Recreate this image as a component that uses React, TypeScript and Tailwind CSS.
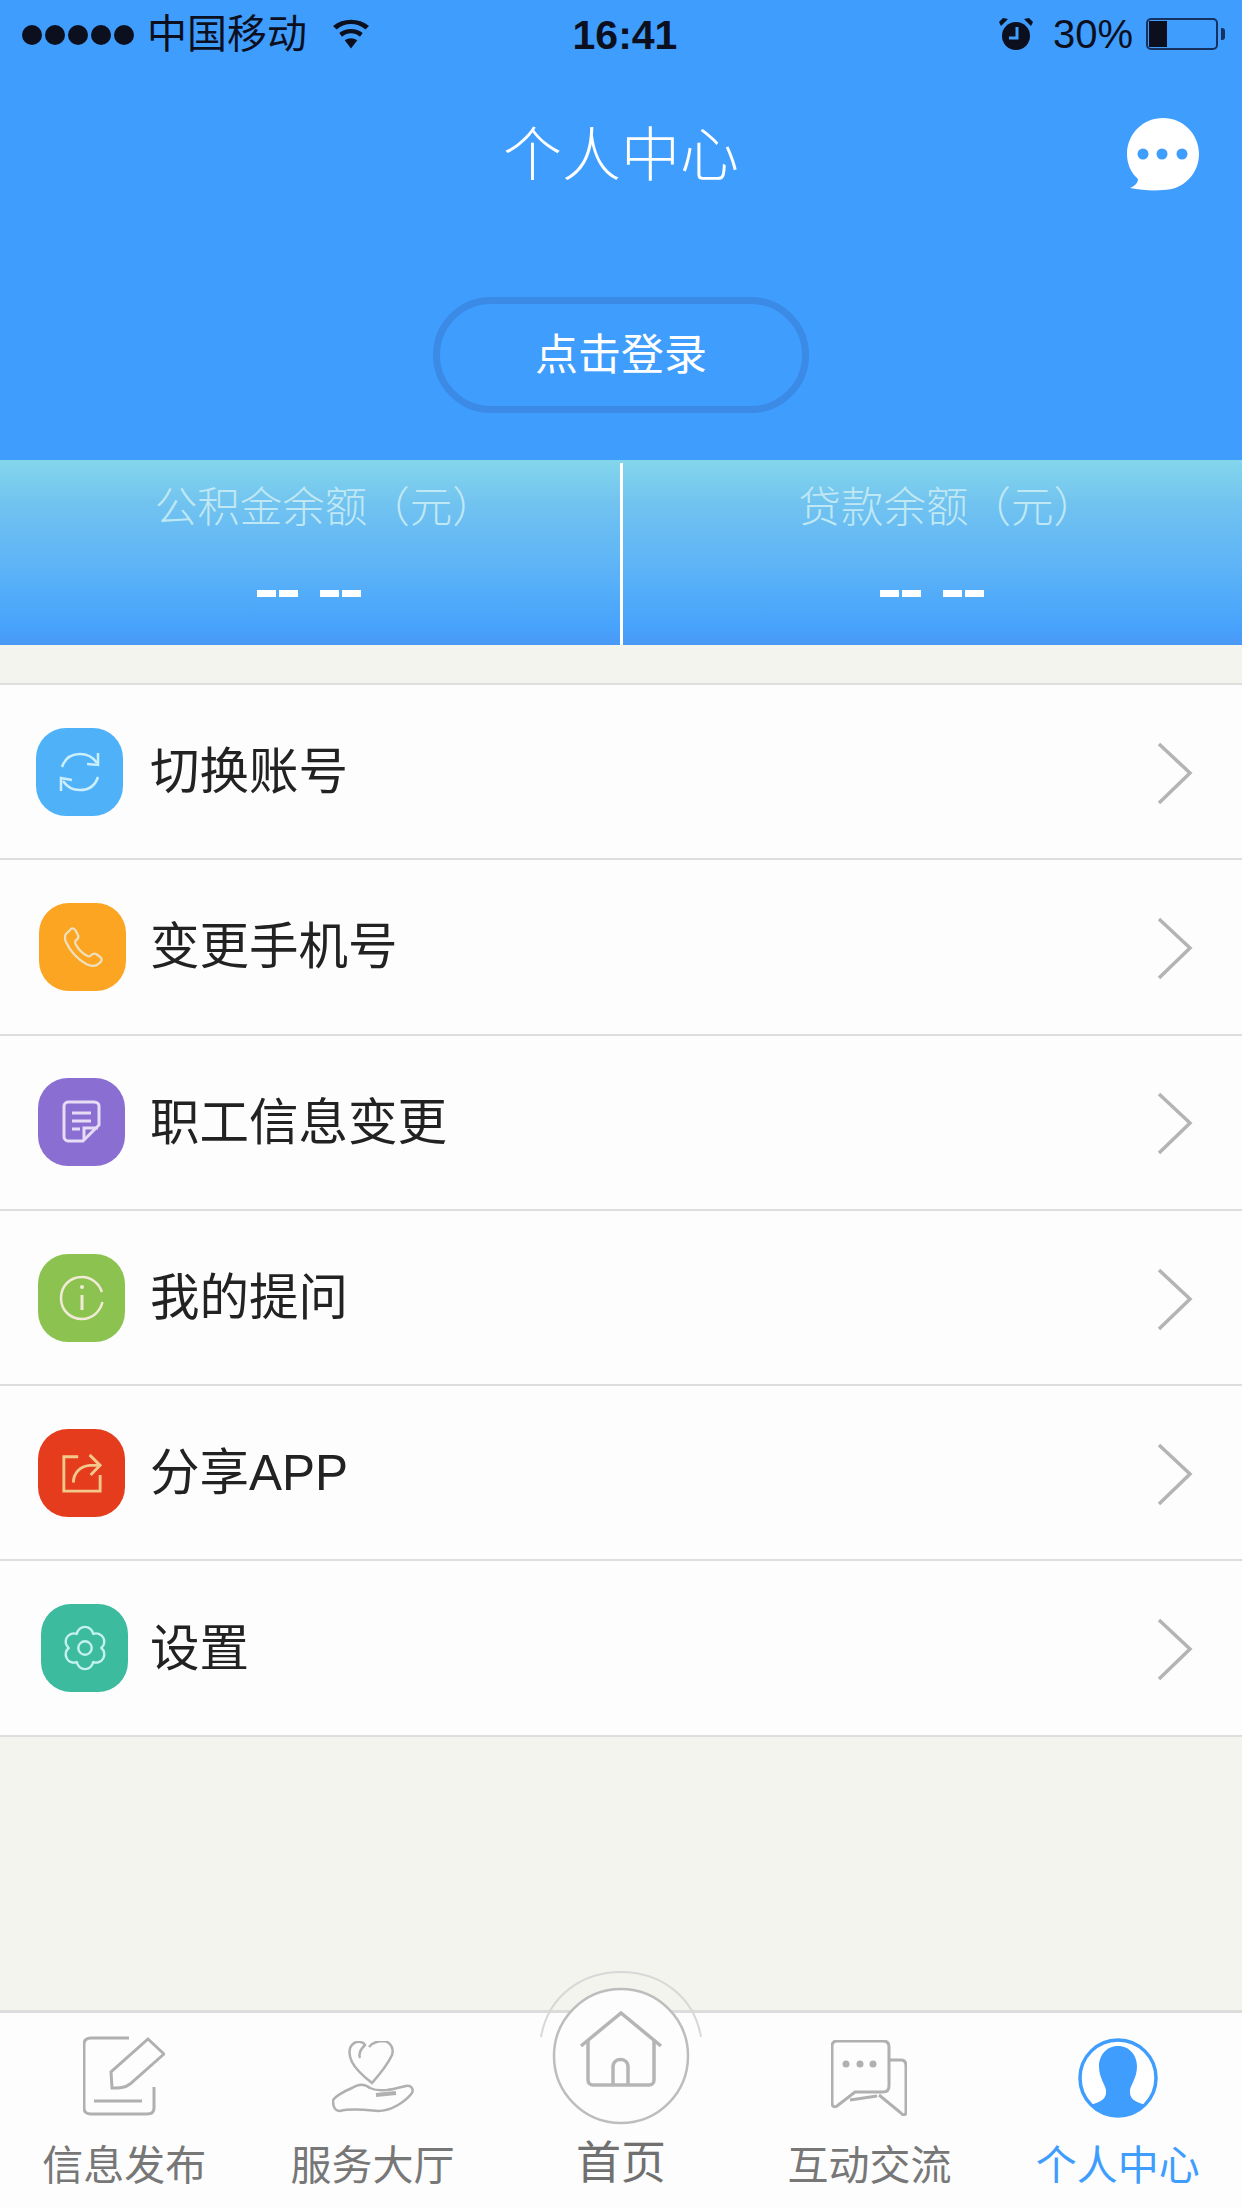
import React from "react";

const font = { fontFamily: '"Liberation Sans", "Noto Sans CJK SC", sans-serif' };

const Chevron = () => (
  <svg width="36" height="64" viewBox="0 0 36 64" fill="none" stroke="#b4b4b4" strokeWidth="3.5">
    <path d="M2 3 L33 32 L2 62" />
  </svg>
);

const SyncIcon = () => (
  <svg width="44" height="44" viewBox="0 0 44 44" fill="none" stroke="#cdeefc" strokeWidth="2.5">
    <path d="M4 17 C7 8 14 4 22 4 C29 4 35 7 39 13" />
    <path d="M40 3 L40 15 L29 14" />
    <path d="M40 27 C37 36 30 40 22 40 C15 40 9 37 5 31" />
    <path d="M3 41 L3 28 L14 30" />
  </svg>
);

const PhoneIcon = () => (
  <svg width="40" height="40" viewBox="0 0 44 44" fill="none" stroke="#efe0bd" strokeWidth="2.5">
    <path d="M3 8 L9 2 C11 1 13 2 14 4 L17 10 C17 12 16 14 14 15 C13 16 13 17 14 19 C17 25 21 29 27 32 C29 33 30 32 31 31 C33 29 35 29 37 30 L41 33 C43 35 43 37 41 39 L37 42 C34 43 30 43 26 41 C17 36 8 27 3 16 C2 13 2 10 3 8 Z" />
  </svg>
);

const NoteIcon = () => (
  <svg width="40" height="44" viewBox="0 0 40 44" fill="none" stroke="#e6dcf5" strokeWidth="3">
    <path d="M21 41 L6 41 C4 41 2 39 2 37 L2 6 C2 4 4 2 6 2 L32 2 C35 2 37 4 37 6 L37 25 L21 41 Z" />
    <path d="M10 13 L29 13 M10 21 L29 21 M10 29 L18 29" />
    <path d="M22 40 L22 28 L36 28" />
  </svg>
);

const InfoIcon = () => (
  <svg width="46" height="46" viewBox="0 0 46 46" fill="none" stroke="#f1ead6" strokeWidth="2.5">
    <path d="M43 17 C40 8 32 2 23 2 C11 2 2 11 2 23 C2 35 11 44 23 44 C33 44 41 37 43.500 27" />
    <path d="M23 20 L23 35" strokeWidth="3" />
    <circle cx="23" cy="12" r="2" fill="#f1ead6" stroke="none" />
  </svg>
);

const ShareIcon = () => (
  <svg width="42" height="42" viewBox="0 0 44 44" fill="none" stroke="#f3c98b" strokeWidth="3">
    <path d="M18 5 L3 5 L3 41 L41 41 L41 24" />
    <path d="M13 32 C13 22 20 15 30 14 L40 14" />
    <path d="M30 3 L41 14 L31 24" />
  </svg>
);

const GearIcon = () => (
  <svg width="46" height="46" viewBox="0 0 48 48" fill="none" stroke="#c5f2ee" strokeWidth="2.500" strokeLinejoin="round">
    <path d="M32.500 9.300 A8.600 8.600 0 0 1 41 24 A8.600 8.600 0 0 1 32.500 38.700 A8.600 8.600 0 0 1 15.500 38.700 A8.600 8.600 0 0 1 7 24 A8.600 8.600 0 0 1 15.500 9.300 A8.600 8.600 0 0 1 32.500 9.300 Z" />
    <circle cx="24" cy="24" r="7" />
  </svg>
);

const items = [
  { label: "切换账号", bg: "bg-[#4fb2f8]", ml: "ml-[36px]", icon: <SyncIcon /> },
  { label: "变更手机号", bg: "bg-[#fca522]", ml: "ml-[39px]", icon: <PhoneIcon /> },
  { label: "职工信息变更", bg: "bg-[#8a6ed2]", ml: "ml-[38px]", icon: <NoteIcon /> },
  { label: "我的提问", bg: "bg-[#8cc350]", ml: "ml-[38px]", icon: <InfoIcon /> },
  { label: "分享APP", bg: "bg-[#e63c1e]", ml: "ml-[38px]", icon: <ShareIcon /> },
  { label: "设置", bg: "bg-[#3dbb9f]", ml: "ml-[41px]", icon: <GearIcon /> },
];

const Balance = ({ label }: { label: string }) => (
  <div className="flex-1 flex flex-col items-center">
    <div className="mt-[20px] h-[56px] text-[42.500px] leading-[56px] text-[#c0e8f4] font-light pl-[30px]">{label}</div>
    <div className="mt-[54px] flex gap-[21px]">
      <div className="w-[42px] h-[7px] bg-[repeating-linear-gradient(90deg,#ffffff_0,#ffffff_19px,transparent_19px,transparent_22px)]" />
      <div className="w-[42px] h-[7px] bg-[repeating-linear-gradient(90deg,#ffffff_0,#ffffff_19px,transparent_19px,transparent_22px)]" />
    </div>
  </div>
);

const App: React.FC = () => {
  return (
    <div className="w-[1242px] h-[2208px] flex flex-col bg-[#f4f4ee] overflow-hidden" style={font}>
      {/* 顶部 */}
      <div className="h-[460px] bg-[#3f9dfe] flex flex-col">
        <div className="h-[60px] grid grid-cols-3 items-center text-[#0c0f1e]">
          <div className="flex items-center pl-[22px]">
            <div className="flex gap-[3px] mt-[4px]">
              {[0, 1, 2, 3, 4].map((i) => (
                <div key={i} className="w-[20px] h-[20px] rounded-full bg-[#0c0f1e]" />
              ))}
            </div>
            <span className="ml-[13px] text-[40px] leading-[60px] mt-[2px]">中国移动</span>
            <svg className="ml-[26px] mt-[2px]" width="36" height="30" viewBox="0 0 40 32" fill="#0c0f1e">
              <path d="M20 32 L13 23 C17 20 23 20 27 23 Z" />
              <path d="M10 19 L7 15 C14 9 26 9 33 15 L30 19 C24 14 16 14 10 19 Z" />
              <path d="M4 11 L0 7 C11 -2 29 -2 40 7 L36 11 C26 3 14 3 4 11 Z" />
            </svg>
          </div>
          <div className="text-center text-[41px] leading-[60px] font-bold pl-[8px] mt-[5px]">16:41</div>
          <div className="flex items-center justify-end pr-[17px] mt-[3px]">
            <svg width="34" height="34" viewBox="0 0 34 34" fill="#0c0f1e">
              <circle cx="17" cy="19" r="14" />
              <path d="M2 9 L9 2 L4 1 L0 5 Z M32 9 L25 2 L30 1 L34 5 Z" />
              <path d="M18 10 L18 21 L10 21" fill="none" stroke="#3f9dfe" strokeWidth="3" />
            </svg>
            <span className="ml-[20px] text-[40px] leading-[60px]">30%</span>
            <div className="ml-[13px] w-[72px] h-[32px] border-2 border-[#16315f] rounded-[5px] p-[1px]">
              <div className="w-[18px] h-full bg-[#0c0f1e]" />
            </div>
            <div className="ml-[3px] w-[4px] h-[12px] bg-[#16315f] rounded-r-[3px]" />
          </div>
        </div>

        <div className="mt-[30px] h-[120px] grid grid-cols-[1fr_auto_1fr] grid-rows-[120px] items-center">
          <div />
          <div className="text-[59px] leading-[100px] text-white font-light mt-[12px]">个人中心</div>
          <div className="flex justify-end pr-[42px] mt-[8px]">
            <svg width="73" height="73" viewBox="0 0 73 73">
              <path d="M36 0 C56 0 72 16 72 36 C72 56 56 72 36 72 C26 73 14 72 3 70 C8 68 11 65 11 61 C4 55 0 46 0 36 C0 16 16 0 36 0 Z" fill="#ffffff" />
              <circle cx="16" cy="36" r="5.500" fill="#3f9dfe" />
              <circle cx="35" cy="36" r="5.500" fill="#3f9dfe" />
              <circle cx="55" cy="36" r="5.500" fill="#3f9dfe" />
            </svg>
          </div>
        </div>

        <div className="mt-[87px] mx-auto w-[376px] h-[116px] rounded-[58px] border-[7px] border-[#3b8ae6] flex items-center justify-center text-[43px] text-white">
          点击登录
        </div>
      </div>

      {/* 余额 */}
      <div className="h-[185px] flex bg-[linear-gradient(180deg,#84d6ec_0%,#70c2f0_25%,#5fb5f6_55%,#47a3fc_90%,#4a98f5_100%)]">
        <Balance label="公积金余额（元）" />
        <div className="w-[3px] mt-[3px] bg-white" />
        <Balance label="贷款余额（元）" />
      </div>

      {/* 菜单 */}
      <div className="mt-[38px] bg-[#fdfdfd] border-t-2 border-[#dedede]">
        {items.map((item) => (
          <div key={item.label} className="h-[175.300px] flex items-center border-b-2 border-[#dedede]">
            <div className="w-[150px] shrink-0">
              <div className={`${item.ml} w-[87px] h-[88px] rounded-[30px] flex items-center justify-center ${item.bg}`}>
                {item.icon}
              </div>
            </div>
            <div className="flex-1 text-[49.500px] leading-[60px] text-[#222222] mt-[1px]">{item.label}</div>
            <div className="mr-[49px] mt-[2px]">
              <Chevron />
            </div>
          </div>
        ))}
      </div>

      <div className="flex-1" />

      {/* 底部导航 */}
      <div className="relative h-[198px] bg-[#fdfdfd] border-t-[3px] border-[#dcdcdc] grid grid-cols-5 text-[41px] text-[#777777]">
        <div className="flex flex-col items-center">
          <svg className="mt-[23px]" width="82" height="80" viewBox="0 0 82 80" fill="none" stroke="#b0b0b0" strokeWidth="3">
            <path d="M46 2 L8 2 C4 2 1 4 1 8 L1 72 C1 76 4 78 8 78 L64 78 C69 78 71 76 71 72 L71 51" />
            <path d="M11 65 L59 65" />
            <path d="M65 3 L81 18 L47 48 C42 52 36 52 29 52 L28 36 L65 3 Z" />
          </svg>
          <div className="mt-[20px] leading-[60px]">信息发布</div>
        </div>
        <div className="flex flex-col items-center">
          <svg className="mt-[28px]" width="82" height="72" viewBox="0 0 82 72" fill="none" stroke="#b0b0b0" strokeWidth="2.500">
            <path d="M28 17 C26 12 30 7 33 4 C31 0 24 0 21 3 C16 7 17 15 20 21 C24 29 31 35 40 42 C47 34 55 25 60 14 C62 8 59 1 52 0 C46 0 40 2 37 6" />
            <path d="M1 60 C1 57 10 51 20 47 C26 43 32 42 38 47 C48 52 62 48 74 45 C79 44 82 48 80 52 C74 60 60 70 46 70 C34 69 20 67 8 70 C3 70 1 65 1 60 Z" />
            <path d="M44 54 L64 52" strokeWidth="4" />
          </svg>
          <div className="mt-[23px] leading-[60px]">服务大厅</div>
        </div>
        <div className="flex flex-col items-center justify-end">
          <div className="text-[45px] leading-[60px] mb-[14px] text-[#707070]">首页</div>
        </div>
        <div className="flex flex-col items-center">
          <svg className="mt-[27px]" width="76" height="76" viewBox="0 0 76 76" fill="none" stroke="#b0b0b0" strokeWidth="3">
            <path d="M6 1 L52 1 C56 1 58 3 58 7 L58 46 C58 50 56 52 52 52 L24 52 L6 66 C3 68 1 66 1 63 L1 6 C1 3 3 1 6 1 Z" />
            <path d="M59 20 L70 20 C73 20 75 22 75 26 L75 72 C75 75 72 76 70 73 L48 55" />
            <path d="M19 60 L46 56" />
            <circle cx="15" cy="24" r="3.500" fill="#b0b0b0" stroke="none" />
            <circle cx="29" cy="24" r="3.500" fill="#b0b0b0" stroke="none" />
            <circle cx="42" cy="24" r="3.500" fill="#b0b0b0" stroke="none" />
          </svg>
          <div className="mt-[20px] leading-[60px]">互动交流</div>
        </div>
        <div className="flex flex-col items-center text-[#3f9dfe]">
          <svg className="mt-[25px]" width="80" height="80" viewBox="0 0 80 80">
            <circle cx="40" cy="40" r="38" fill="#ffffff" stroke="#3f9dfe" strokeWidth="3.500" />
            <path d="M40 8 C52 8 59 18 59 28 C59 40 53 46 52 52 C51 60 56 64 68 67 C60 75 50 78 40 78 C30 78 20 75 12 67 C24 64 29 60 28 52 C27 46 21 40 21 28 C21 18 28 8 40 8 Z" fill="#3f9dfe" />
          </svg>
          <div className="mt-[18px] leading-[60px]">个人中心</div>
        </div>

        {/* 中间凸起的首页按钮 */}
        <div className="absolute left-[540px] top-[-42px] w-[162px] h-[156px]">
          <svg width="162" height="156" viewBox="0 0 162 156" fill="none">
            <path d="M1 66 C8 25 42 1 81 1 C120 1 154 25 161 66" stroke="#d8d8d8" strokeWidth="2" />
            <circle cx="81" cy="85" r="67" fill="#fdfdfd" stroke="#bdbdbd" strokeWidth="2.500" />
            <path d="M41 75 L81 42 L121 75" stroke="#b5b5b5" strokeWidth="3.500" />
            <path d="M48 70 L48 109 C48 112 50 114 53 114 L109 114 C112 114 114 112 114 109 L114 70" stroke="#b5b5b5" strokeWidth="3.500" />
            <path d="M73 114 L73 96 C73 86 88 86 88 96 L88 114" stroke="#b5b5b5" strokeWidth="3.500" />
          </svg>
        </div>
      </div>
    </div>
  );
};

export default App;
